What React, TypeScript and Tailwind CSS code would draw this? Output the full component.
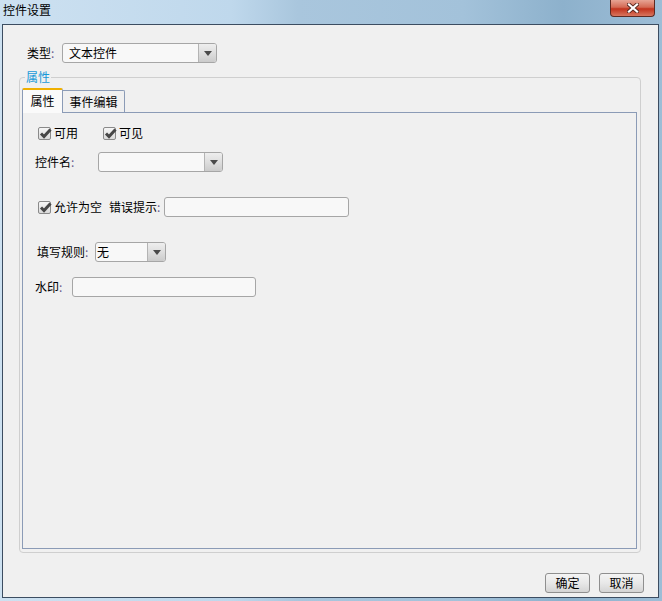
import React from "react";

const FONT = { fontFamily: '"Noto Sans CJK SC", "Noto Sans", sans-serif' };

function Colon() {
  return <span className="text-[#6a5b8e]">:</span>;
}

function Arrow() {
  return (
    <div className="w-[18px] h-full border-l border-[#b4b4b4] rounded-r-[2px] bg-[linear-gradient(180deg,#eeeeee_0%,#dedede_50%,#cbcbcb_100%)] flex items-center justify-center">
      <svg width="8" height="5" viewBox="0 0 8 5">
        <path d="M0 0 H8 L4 5 Z" fill="#4a4a4a" />
      </svg>
    </div>
  );
}

function Combo({ w, text, pl = "pl-[6px]" }: { w: string; text?: string; pl?: string }) {
  return (
    <div className={`${w} h-[20px] border border-[#a6a6a6] rounded-[3px] bg-[#f8f8f8] flex`}>
      <div className={`flex-1 flex items-center ${pl} text-[12px] leading-[14px] text-black`}>{text}</div>
      <Arrow />
    </div>
  );
}

function Input({ w }: { w: string }) {
  return <div className={`${w} h-[20px] border border-[#a6a6a6] rounded-[3px] bg-[#f8f8f8]`} />;
}

function Check() {
  return (
    <div className="relative w-[13px] h-[13px] border border-[#8a8a8a] rounded-[2px] bg-[linear-gradient(180deg,#f6f6f6_0%,#dadada_100%)]">
      <svg className="absolute left-[0px] top-[-1px]" width="13" height="13" viewBox="0 0 13 13">
        <path d="M2 6.5 L5 9.5 L11.5 2.5" fill="none" stroke="#474747" strokeWidth="3" strokeLinecap="butt" strokeLinejoin="miter" />
      </svg>
    </div>
  );
}

function Button({ label }: { label: string }) {
  return (
    <div className="w-[45px] h-[20px] border border-[#8f8f8f] rounded-[3px] bg-[linear-gradient(180deg,#f4f4f4_0%,#e8e8e8_50%,#d4d4d4_100%)] flex items-center justify-center text-[12px] leading-[14px] text-black">
      {label}
    </div>
  );
}

export default function App() {
  return (
    <div
      style={FONT}
      className="w-[662px] h-[601px] flex flex-col overflow-hidden bg-[linear-gradient(90deg,#cde1f1_0%,#bfd8ec_35%,#a9c6dd_45%,#a3c2da_70%,#8db1cc_85%,#9dbdd6_100%)]"
    >
      {/* title bar */}
      <div className="h-[24px] flex justify-between items-start">
        <div className="pl-[3px] pt-[3px] text-[12px] leading-[14px] text-black">控件设置</div>
        <div className="mr-[7px] w-[45px] h-[17px] border border-[#5e2a22] border-t-0 rounded-b-[4px] bg-[linear-gradient(180deg,#e7a494_0%,#d46a54_45%,#c2331d_55%,#d8765f_100%)] flex items-center justify-center">
          <svg width="12" height="10" viewBox="0 0 12 10">
            <path d="M2 1.5 L10 8.5 M10 1.5 L2 8.5" stroke="#5a2a22" strokeWidth="4" strokeLinecap="square" />
            <path d="M2 1.5 L10 8.5 M10 1.5 L2 8.5" stroke="#ffffff" strokeWidth="2.2" strokeLinecap="square" />
          </svg>
        </div>
      </div>

      {/* client area */}
      <div className="ml-[2px] w-[657px] h-[574px] border border-[#3c4d61] bg-[#f0f0f0] flex flex-col text-[12px] leading-[14px] text-black">
        {/* type row */}
        <div className="mt-[18px] ml-[24px] h-[20px] flex items-center">
          <div className="w-[35px]">
            类型<Colon />
          </div>
          <Combo w="w-[155px]" text="文本控件" />
        </div>

        {/* fieldset */}
        <div className="mt-[14px] ml-[16px] w-[622px] h-[476px] border border-[#cfcfcf] rounded-[4px] relative pt-[10px] pl-[2px]">
          <div className="absolute left-[5px] top-[-8px] px-px bg-[#f0f0f0] text-[#1899d8] text-[12px] leading-[14px]">属性</div>

          {/* tabs */}
          <div className="h-[24px] flex items-end">
            <div className="relative z-10 -mb-px w-[41px] h-[25px] border-x border-[#8b9bb6] border-t-2 border-t-[#f0b000] rounded-t-[2px] bg-[#fafafa] flex items-center justify-center pb-[2px]">
              属性
            </div>
            <div className="w-[62px] h-[22px] border-t border-r border-[#8b9bb6] rounded-tr-[2px] bg-[#f0f0f0] flex items-center justify-center">
              事件编辑
            </div>
          </div>

          {/* panel */}
          <div className="w-[615px] h-[437px] border border-[#8b9bb6] bg-[#f0f0f0] pl-[12px] flex flex-col">
            <div className="mt-[10px] ml-[3px] h-[20px] flex items-center">
              <div className="w-[65px] flex items-center gap-[3px]">
                <Check />
                <span>可用</span>
              </div>
              <div className="flex items-center gap-[3px]">
                <Check />
                <span>可见</span>
              </div>
            </div>

            <div className="mt-[9px] h-[20px] flex items-center">
              <div className="w-[63px]">
                控件名<Colon />
              </div>
              <Combo w="w-[125px]" />
            </div>

            <div className="mt-[25px] ml-[3px] h-[20px] flex items-center">
              <div className="flex items-center gap-[3px]">
                <Check />
                <span>允许为空</span>
              </div>
              <div className="ml-[7px] w-[55px]">
                错误提示<Colon />
              </div>
              <Input w="w-[185px]" />
            </div>

            <div className="mt-[25px] ml-[2px] h-[20px] flex items-center">
              <div className="w-[58px]">
                填写规则<Colon />
              </div>
              <Combo w="w-[71px]" text="无" pl="pl-[1px]" />
            </div>

            <div className="mt-[15px] h-[20px] flex items-center">
              <div className="w-[37px]">
                水印<Colon />
              </div>
              <Input w="w-[184px]" />
            </div>
          </div>
        </div>

        {/* buttons */}
        <div className="mt-auto mb-[4px] mr-[14px] flex justify-end gap-[9px]">
          <Button label="确定" />
          <Button label="取消" />
        </div>
      </div>
    </div>
  );
}
